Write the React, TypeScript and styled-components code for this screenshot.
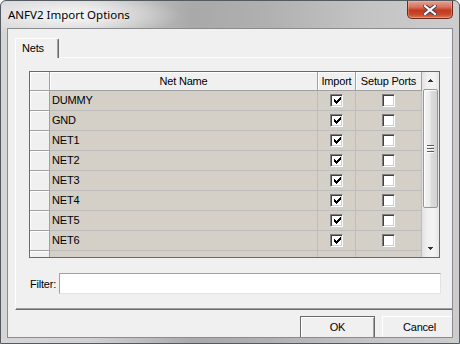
import React from 'react';
import styled, { createGlobalStyle, css } from 'styled-components';

const nets = ['DUMMY', 'GND', 'NET1', 'NET2', 'NET3', 'NET4', 'NET5', 'NET6'];

const GlobalStyle = createGlobalStyle`
  html, body {
    margin: 0;
    padding: 0;
    width: 460px;
    height: 344px;
    overflow: hidden;
    background: #ffffff;
  }
  body {
    font-family: "Liberation Sans", Arial, sans-serif;
    font-size: 11px;
    letter-spacing: -0.2px;
    color: #000;
  }
`;

const Window = styled.div`
  width: 460px;
  height: 344px;
  box-sizing: border-box;
  display: flex;
  flex-direction: column;
  border: 1px solid #555a60;
  border-radius: 6px 6px 0 0;
  overflow: hidden;
  background:
    radial-gradient(ellipse 110px 22px at 70px 14px, rgba(255, 255, 255, 0.85), rgba(255, 255, 255, 0) 100%),
    linear-gradient(to right, #d6d6d6 0%, #d0d0d0 20%, #a9a9a9 42%, #b0b0b0 58%, #c4c4c4 80%, #cdcdcd 100%);
`;

const TitleBar = styled.div`
  height: 27px;
  flex: none;
  display: flex;
  justify-content: space-between;
  align-items: flex-start;
  padding: 0 6px 0 7px;
`;

const Title = styled.div`
  font-family: "Noto Sans", "Open Sans", sans-serif;
  font-size: 11.5px;
  letter-spacing: 0;
  line-height: 28px;
  color: #000;
`;

const CloseButton = styled.div`
  width: 46px;
  height: 18px;
  box-sizing: border-box;
  display: flex;
  align-items: center;
  justify-content: center;
  border: 1px solid #6b2a1e;
  border-top: none;
  border-radius: 0 0 5px 5px;
  background: linear-gradient(to bottom, #e3a393 0%, #d7735e 35%, #c5391c 55%, #c94a2c 80%, #df7a5c 100%);
  box-shadow: inset 0 0 0 1px rgba(255, 200, 180, 0.35);
`;

const Frame = styled.div`
  flex: 1;
  display: flex;
  flex-direction: column;
  padding: 0 6px 5px 6px;
  min-height: 0;
`;

const Client = styled.div`
  flex: 1;
  display: flex;
  flex-direction: column;
  border: 1px solid #8a8c8f;
  background: #f0f0f0;
  padding: 9px 0 0 7px;
  overflow: hidden;
  min-height: 0;
`;

const TabStrip = styled.div`
  display: flex;
  position: relative;
  z-index: 1;
  margin-bottom: -1px;
`;

const Tab = styled.div`
  width: 44px;
  height: 20px;
  box-sizing: border-box;
  padding: 0 0 0 6px;
  line-height: 19px;
  background: #f0f0f0;
  border-top: 1px solid #ffffff;
  border-left: 1px solid #ffffff;
  border-right: 1px solid #696969;
  border-radius: 2px 2px 0 0;
  box-shadow: inset -1px 0 #a0a0a0;
`;

const TabPanel = styled.div`
  height: 253px;
  flex: none;
  box-sizing: border-box;
  margin-right: -4px;
  border-top: 1px solid #ffffff;
  border-left: 1px solid #ffffff;
  border-bottom: 1px solid #696969;
  box-shadow: inset 0 -1px #a0a0a0;
  padding: 13px 0 0 13px;
  display: flex;
  flex-direction: column;
`;

const GridFrame = styled.div`
  width: 411px;
  height: 187px;
  box-sizing: border-box;
  border: 1px solid #696969;
  display: flex;
  background: #d4d0c8;
`;

const TableArea = styled.div`
  width: 392px;
  overflow: hidden;
  display: flex;
  flex-direction: column;
`;

const Row = styled.div<{ $header?: boolean }>`
  display: flex;
  flex: none;
  height: ${(p) => (p.$header ? 19 : 20)}px;
`;

const HeadCell = styled.div<{ $w: number }>`
  width: ${(p) => p.$w}px;
  flex: none;
  box-sizing: border-box;
  background: #f0f0f0;
  border-right: 1px solid #a0a0a0;
  border-bottom: 1px solid #a0a0a0;
  box-shadow: inset 1px 1px #ffffff;
  text-align: center;
  line-height: 18px;
  white-space: nowrap;
`;

const DataCell = styled.div<{ $w: number; $center?: boolean }>`
  width: ${(p) => p.$w}px;
  flex: none;
  box-sizing: border-box;
  border-right: 1px solid #bdbdbd;
  border-bottom: 1px solid #bdbdbd;
  padding-left: 2px;
  line-height: 19px;
  white-space: nowrap;
  ${(p) =>
    p.$center &&
    css`
      padding-left: 0;
      display: flex;
      align-items: center;
      justify-content: center;
    `}
`;

const CheckBox = styled.div`
  width: 13px;
  height: 13px;
  box-sizing: border-box;
  background: #ffffff;
  border-top: 1px solid #808080;
  border-left: 1px solid #808080;
  border-right: 1px solid #ffffff;
  border-bottom: 1px solid #ffffff;
  box-shadow: inset 1px 1px #404040, inset -1px -1px #d4d0c8;
  display: flex;
  align-items: center;
  justify-content: center;
  margin-top: -1px;
  svg {
    display: block;
    margin: 1px 0 0 1px;
  }
`;

const ScrollBar = styled.div`
  width: 17px;
  flex: none;
  display: flex;
  flex-direction: column;
  background: linear-gradient(to right, #e2e2e2 0%, #f0f0f0 30%, #f3f3f3 70%, #e6e6e6 100%);
`;

const ArrowButton = styled.div`
  height: 17px;
  flex: none;
  display: flex;
  align-items: center;
  justify-content: center;
`;

const Track = styled.div`
  flex: 1;
  padding: 0 1px;
`;

const Thumb = styled.div`
  height: 119px;
  box-sizing: border-box;
  border: 1px solid #979797;
  border-radius: 2px;
  background: linear-gradient(to right, #f6f6f6 0%, #ececec 45%, #dcdcdc 55%, #d2d2d2 100%);
  box-shadow: inset 1px 1px rgba(255, 255, 255, 0.9);
  display: flex;
  align-items: center;
  justify-content: center;
`;

const Grip = styled.div`
  width: 7px;
  display: flex;
  flex-direction: column;
  gap: 1px;
  span {
    display: block;
    height: 1px;
    background: #5c5c5c;
    box-shadow: 0 1px #ffffff;
    margin-bottom: 1px;
  }
`;

const FilterRow = styled.div`
  display: flex;
  align-items: center;
  margin-top: 15px;
  padding-left: 1px;
`;

const Label = styled.label`
  width: 29px;
  flex: none;
`;

const TextBox = styled.div`
  width: 382px;
  height: 21px;
  box-sizing: border-box;
  background: #ffffff;
  border-top: 1px solid #a0a0a0;
  border-left: 1px solid #a0a0a0;
  border-right: 1px solid #e3e3e3;
  border-bottom: 1px solid #e3e3e3;
`;

const ButtonRow = styled.div`
  display: flex;
  justify-content: flex-end;
  gap: 7px;
  margin: 6px -5px 0 0;
`;

const Button = styled.div<{ $default?: boolean }>`
  width: 75px;
  height: 23px;
  flex: none;
  box-sizing: border-box;
  background: #f0f0f0;
  text-align: center;
  line-height: 21px;
  ${(p) =>
    p.$default
      ? css`
          border: 1px solid #696969;
          box-shadow: inset 1px 1px #ffffff, inset -1px -1px #a0a0a0;
        `
      : css`
          border-top: 1px solid #ffffff;
          border-left: 1px solid #ffffff;
          border-right: 1px solid #696969;
          border-bottom: 1px solid #696969;
          box-shadow: inset -1px -1px #a0a0a0;
        `}
`;

const CheckMark = () => (
  <svg width="7" height="7" viewBox="0 0 7 7" shapeRendering="crispEdges">
    <path
      fill="#000"
      d="M6 0h1v1h-1z M5 1h2v1h-2z M0 2h1v1h-1z M4 2h3v1h-3z M0 3h2v1h-2z M3 3h3v1h-3z M0 4h5v1h-5z M1 5h3v1h-3z M2 6h1v1h-1z"
    />
  </svg>
);

const Arrow = ({ down }: { down?: boolean }) => (
  <svg width="5" height="3" viewBox="0 0 5 3" shapeRendering="crispEdges">
    <path
      fill="#333"
      d={down ? 'M0 0h5v1H0z M1 1h3v1H1z M2 2h1v1H2z' : 'M2 0h1v1H2z M1 1h3v1H1z M0 2h5v1H0z'}
    />
  </svg>
);

const CloseGlyph = () => (
  <svg width="14" height="10" viewBox="0 0 14 10">
    <path
      d="M2 1 L12 9 M12 1 L2 9"
      stroke="#3d3b55"
      strokeWidth="4"
      strokeLinecap="square"
      fill="none"
    />
    <path
      d="M2 1 L12 9 M12 1 L2 9"
      stroke="#ffffff"
      strokeWidth="2.2"
      strokeLinecap="square"
      fill="none"
    />
  </svg>
);

const cols = { rowHead: 20, name: 268, imp: 38, ports: 66 };

const App: React.FC = () => (
  <>
    <GlobalStyle />
    <Window>
      <TitleBar>
        <Title>ANFV2 Import Options</Title>
        <CloseButton>
          <CloseGlyph />
        </CloseButton>
      </TitleBar>
      <Frame>
        <Client>
          <TabStrip>
            <Tab>Nets</Tab>
          </TabStrip>
          <TabPanel>
            <GridFrame>
              <TableArea>
                <Row $header>
                  <HeadCell $w={cols.rowHead} />
                  <HeadCell $w={cols.name}>Net Name</HeadCell>
                  <HeadCell $w={cols.imp}>Import</HeadCell>
                  <HeadCell $w={cols.ports}>Setup Ports</HeadCell>
                </Row>
                {nets.map((net) => (
                  <Row key={net}>
                    <HeadCell $w={cols.rowHead} />
                    <DataCell $w={cols.name}>{net}</DataCell>
                    <DataCell $w={cols.imp} $center>
                      <CheckBox>
                        <CheckMark />
                      </CheckBox>
                    </DataCell>
                    <DataCell $w={cols.ports} $center>
                      <CheckBox />
                    </DataCell>
                  </Row>
                ))}
                <Row>
                  <HeadCell $w={cols.rowHead} />
                  <DataCell $w={cols.name} />
                  <DataCell $w={cols.imp} />
                  <DataCell $w={cols.ports} />
                </Row>
              </TableArea>
              <ScrollBar>
                <ArrowButton>
                  <Arrow />
                </ArrowButton>
                <Track>
                  <Thumb>
                    <Grip>
                      <span />
                      <span />
                      <span />
                    </Grip>
                  </Thumb>
                </Track>
                <ArrowButton>
                  <Arrow down />
                </ArrowButton>
              </ScrollBar>
            </GridFrame>
            <FilterRow>
              <Label>Filter:</Label>
              <TextBox />
            </FilterRow>
          </TabPanel>
          <ButtonRow>
            <Button $default>OK</Button>
            <Button>Cancel</Button>
          </ButtonRow>
        </Client>
      </Frame>
    </Window>
  </>
);

export default App;
